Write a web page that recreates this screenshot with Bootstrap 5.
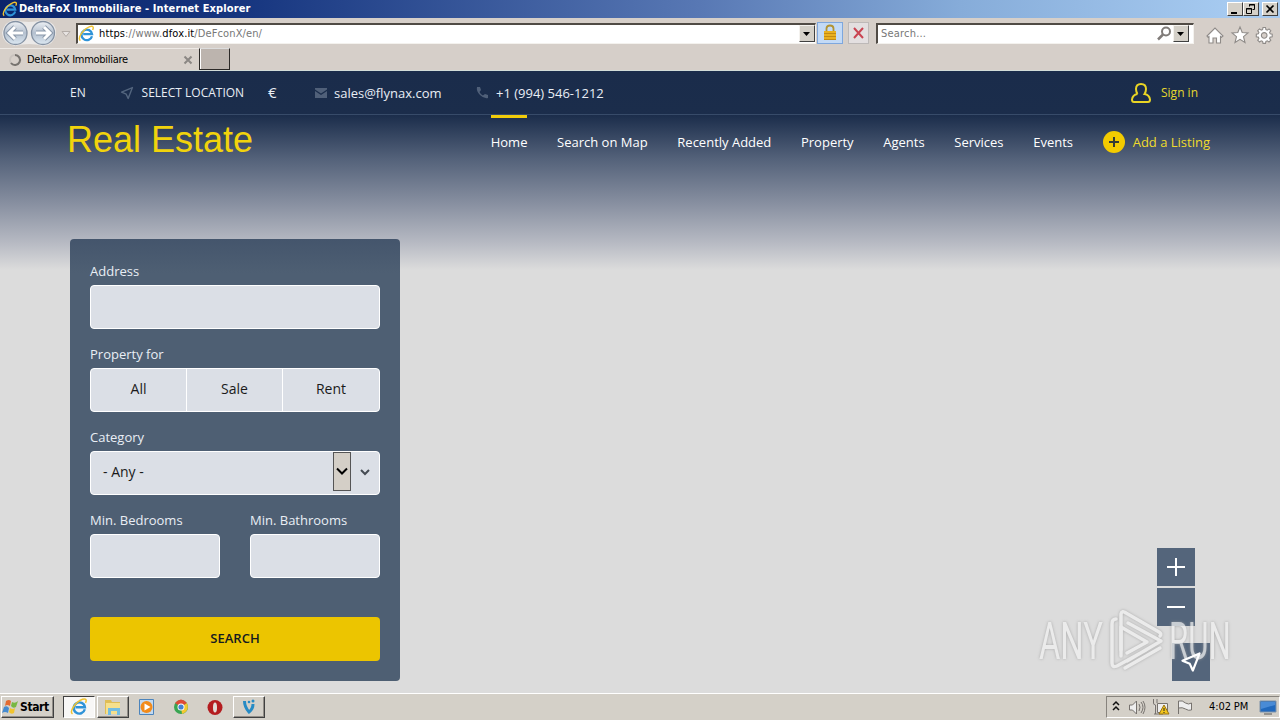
<!DOCTYPE html>
<html lang="en">
<head>
<meta charset="utf-8">
<title>DeltaFoX Immobiliare</title>
<link rel="stylesheet" href="https://cdn.jsdelivr.net/npm/bootstrap@5.3.0/dist/css/bootstrap.min.css">
<style>
html,body{width:1280px;height:720px;overflow:hidden}
body{font-family:"Open Sans",sans-serif;font-size:13px;line-height:18px;background:#dcdcdc;color:#fff}
svg{display:block;flex:none}
.ui{font-family:"DejaVu Sans Condensed","DejaVu Sans",sans-serif;font-size:11px;line-height:14px;color:#000;white-space:nowrap}
.titlebar{height:18px;background:linear-gradient(90deg,#0a246a 0,#16357f 240px,#5878b4 700px,#86acd9 960px,#a6caf0 1230px);padding:0 2px}
.titlebar b{color:#fff;letter-spacing:.1px;margin-left:1px}
.winbtn{width:16px;height:14px;background:#d4d0c8;border:1px solid;border-color:#fff #404040 #404040 #fff}
.toolbar{height:30px;background:#d6cfc9}
.sunken{height:21px;background:#fff;border:1px solid;border-width:2px 1px 1px 2px;border-color:#504b45 #f4f2ee #f4f2ee #504b45}
.drop{width:16px;height:17px;background:#d4d0c8;border:1px solid;border-color:#f4f2ee #404040 #404040 #f4f2ee}
.toolbtn{height:22px;border:1px solid #bdb9b8;background:#e3dfe0}
.lockbtn{width:26px;border-color:#7ea7dd;background:#c3daf6}
.tabs{height:23px;background:#d6cfc9;border-bottom:1px solid #d2dcd8}
.tab1{width:199px;height:22px;border-top:1px solid #eeeae6;background:#d7d0ca}
.newtab{width:31px;height:22px;background:#bcb4ae;border:1px solid #2b2927;border-top-color:#ddd;box-shadow:inset 1px 0 #fff}
.site{height:622px;background:linear-gradient(#1a2c4b 0,#1b2d4b 44px,#54627a 88px,#878fa0 132px,#b7bac3 172px,#dcdcdc 199px)}
.topbar{height:44px;border-bottom:1px solid #374b69;padding:0 70px;color:#e9eef5}
.brandname{font:36px/50px "Liberation Sans",sans-serif;color:#f1d30c;width:200px;margin-left:-3px;height:50px}
.mainnav{height:124px;padding:0 70px}
.mainnav .links{gap:29.65px;height:55px}
.links span,.links .add{line-height:18px;padding-top:18px}
.active-link{border-top:3px solid #f1cc0a;padding-top:15px!important}
.add{gap:8px;color:#f0dc2c}
.searchbox{width:330px;height:442px;margin-left:70px;border-radius:4px;background:linear-gradient(#44556c,#4e5f73 34px);padding:24px 20px 20px;color:#e9eef5}
.searchbox label{display:block;height:22px;line-height:16px}
.field{height:44px;background:#dbdfe6;border:1px solid #fff;border-radius:4px;color:#1a1a1a;font-size:14px}
.field .seg{width:96px;text-align:center;line-height:39px}
.field .seg:last-child{flex:1}
.seg+.seg{border-left:1px solid #fff}
.nativedrop{width:18px;height:39px;background:#d4cfc7;border:1px solid #555;margin-right:9px}
.go{height:44px;border-radius:4px;background:#ecc500;color:#151b20;font-weight:600;font-size:13px;line-height:43px}
.mapbtn{width:38px;height:38px;background:#54657b}
.mapctl{position:absolute;left:1157px;top:548px;gap:2px}
.locate{position:absolute;left:1172px;top:643px}
.watermark{position:absolute;left:1030px;top:600px;opacity:.75;filter:drop-shadow(0 0 1.5px #999)}
.watermark text{font-family:Roboto,sans-serif;font-size:52px}
.taskbar{height:27px;background:#d4d0c8;border-top:1px solid #fff;padding-top:2px}
.raised{height:22px;border:1px solid;border-color:#fff #404040 #404040 #fff;background:#d4d0c8;box-shadow:inset -1px -1px #928e88}
.pressed{border-color:#404040 #fff #fff #404040;background:#f8f7f6;box-shadow:none}
.tray{height:22px;width:174px;border:1px solid;border-color:#87837d #fff #fff #87837d}
</style>
</head>
<body>
<svg width="0" height="0" class="position-absolute">
<defs>
<symbol id="ie" viewBox="0 0 18 18"><path d="M14.800 11.800A5.600 5.600 0 1 1 14.900 9.700H5.500" fill="none" stroke="#2f93d8" stroke-width="2.400"/><path d="M2.500 16.500C-1 14 5.500 4.500 12.500 1.800c3.500-1.200 4.500.5 3 3.500" fill="none" stroke="#f0c230" stroke-width="1.500"/></symbol>
<symbol id="plane" viewBox="0 0 18 18"><path d="M16 2 10.500 16 8 10.500 2 8z" fill="none" stroke="currentColor" stroke-width="1.800" stroke-linejoin="round"/></symbol>
</defs>
</svg>
<header class="ui">
<div class="titlebar d-flex align-items-center"><svg width="16" height="16"><use href="#ie"/></svg><b>DeltaFoX Immobiliare - Internet Explorer</b>
<div class="d-flex ms-auto">
<div class="winbtn"><svg width="14" height="12"><path d="M3 9h6v2H3z"/></svg></div>
<div class="winbtn"><svg width="14" height="12"><path d="M5.500 3.500v-2h5v5h-2M5 2h6M2.500 5.500h5v5h-5zM2 6h6" fill="none" stroke="#000"/></svg></div>
<div class="winbtn" style="margin-left:3px"><svg width="14" height="12"><path d="m3.500 2.500 7 7m0-7-7 7" stroke="#000" stroke-width="1.700"/></svg></div>
</div></div>
<div class="toolbar d-flex align-items-center">
<svg width="76" height="30"><defs><linearGradient id="nb" x2="0" y2="1"><stop stop-color="#edf0f4"/><stop offset=".5" stop-color="#b4c0cf"/><stop offset="1" stop-color="#dce8f2"/></linearGradient></defs>
<path d="M15 2Q29 6 43 2q14 2 13 14-2 11-13 12-14-4-28 0Q3 26 2 15 4 3 15 2" fill="#ebe9e8"/>
<g fill="url(#nb)" stroke="#8592a3" stroke-width="1.300"><circle cx="15.500" cy="15" r="11.500"/><circle cx="43" cy="15" r="11.500"/></g>
<path d="M23 15H9m6-6-6 6 6 6M36 15h14m-6-6 6 6-6 6" fill="none" stroke="#8997a9" stroke-width="5"/><path d="M23 15H9m6-6-6 6 6 6M36 15h14m-6-6 6 6-6 6" fill="none" stroke="#fff" stroke-width="3"/><path d="M62 13.500h8l-4 5z" fill="#e7e3e1" stroke="#b3aca7"/></svg>
<div class="sunken d-flex align-items-center" style="width:740px"><svg class="ms-0" width="17" height="17"><use href="#ie"/></svg><span class="url ms-1" style="letter-spacing:.12px;color:#777"><span class="text-black">https</span>://www.<span class="text-black">dfox.it</span>/DeFconX/en/</span><div class="drop ms-auto"><svg width="14" height="15"><path d="M3 6h7L6.500 10z"/></svg></div></div>
<div class="toolbtn lockbtn" style="margin-left:1px"><svg width="24" height="20"><path d="M8.500 9V5.500q0-3 3.500-3t3.500 3V9" fill="none" stroke="#b29332" stroke-width="1.800"/><path d="M6 8h12v9H6z" fill="#e9b020"/><path d="M6 10.500h12M6 13.500h12M6 16.500h12" stroke="#c38a12"/></svg></div>
<div class="toolbtn" style="width:21px;margin-left:5px"><svg width="19" height="20"><path d="m5 5 9 10m0-10L5 15" stroke="#c94452" stroke-width="2"/></svg></div>
<div class="sunken d-flex align-items-center" style="width:318px;margin-left:7px;color:#777"><span style="margin-left:3px;letter-spacing:.2px">Search...</span><svg class="ms-auto" width="18" height="17"><circle cx="11" cy="6.500" r="4" fill="none" stroke="#807c79" stroke-width="2"/><path d="m8 9.500-5 5" stroke="#807c79" stroke-width="2.500"/></svg><div class="drop" style="margin-right:4px"><svg width="14" height="15"><path d="M3 6h7L6.500 10z"/></svg></div></div>
<svg width="84" height="30"><g transform="translate(-1194 -18)" fill="#fff" stroke="#8f8b88" stroke-width="1.100"><path d="m1207 36 8-8 8 8-1.500 1.200-1-.8V43h-4v-5h-3.500v5h-4v-6.500l-1 .7z"/><path d="m1240 27 2.200 5.500 5.800.4-4.500 3.800 1.500 5.800-5-3.200-5 3.200 1.500-5.800-4.500-3.800 5.800-.4z"/><path fill-rule="evenodd" d="m1263 27.500h2.500l.4 2 1.400.6 1.700-1.200 1.800 1.800-1.200 1.700.6 1.400 2 .4v2.500l-2 .4-.6 1.400 1.200 1.700-1.800 1.800-1.700-1.200-1.400.6-.4 2h-2.500l-.4-2-1.400-.6-1.700 1.200-1.800-1.800 1.200-1.700-.6-1.400-2-.4v-2.500l2-.4.6-1.400-1.200-1.700 1.800-1.800 1.700 1.200 1.400-.6zM1267 35.400a2.800 2.800 0 1 0-5.600 0 2.800 2.800 0 1 0 5.600 0z"/></g></svg>
</div>
<div class="tabs d-flex"><div class="tab1 d-flex align-items-center"><svg width="27" height="22"><circle cx="15" cy="11" r="5" fill="none" stroke="#c9c3be" stroke-width="2"/><path d="M15 6a5 5 0 1 1-4 8" fill="none" stroke="#77736f" stroke-width="2"/></svg><span style="letter-spacing:-.28px;padding-top:1px">DeltaFoX Immobiliare</span><svg class="ms-auto me-1" width="14" height="20"><path d="m3.500 6.500 7 7m0-7-7 7" stroke="#8b8784" stroke-width="2"/></svg></div><div class="newtab"></div></div>
</header>
<main class="site">
<div class="topbar d-flex align-items-center">
<span style="width:50px;font-size:12px">EN</span>
<svg width="14" height="14" style="color:#53657e"><use href="#plane"/></svg><span style="margin-left:7.600px;width:126.400px;font-size:12px" class="text-nowrap">SELECT LOCATION</span><span style="width:47px;font-size:15px;padding-bottom:2px">€</span>
<svg width="12" height="10"><path d="M0 0h12v1.500L6 5.500 0 1.500zM0 3l6 4 6-4v7H0z" fill="#506079"/></svg><span style="margin-left:7px;width:142px">sales@flynax.com</span>
<svg width="13" height="13"><path d="M1 1h3l1 3-1.500 2q1 2.300 3.400 3.400L9 8l3 1v3q-4 1-8-3T1 1" fill="#506079"/></svg><span style="margin-left:7px">+1 (994) 546-1212</span>
<svg class="ms-auto" width="20" height="20" fill="none" stroke="#e9d525" stroke-width="2"><path d="M6.500 11Q5 9 5 6q0-5 5-5t5 5q0 3-1.500 5 5 1 5.500 5.500 0 2.500-2 2.500H3q-2 0-2-2.500Q1.500 12 6.500 11"/></svg><span style="margin:0 12px 0 10px;color:#e5d82e;font-size:12px;padding-top:1px">Sign in</span>
</div>
<div class="mainnav d-flex justify-content-between"><div class="brandname">Real Estate</div>
<nav class="links d-flex text-nowrap"><span class="active-link align-self-start">Home</span><span>Search on Map</span><span>Recently Added</span><span>Property</span><span>Agents</span><span>Services</span><span>Events</span><div class="add d-flex"><svg width="22" height="22" style="margin-top:-2px"><circle cx="11" cy="11" r="11" fill="#f3cb00"/><path d="M6 11h10M11 6v10" stroke="#333b36" stroke-width="2"/></svg>Add a Listing</div></nav></div>
<form class="searchbox">
<label>Address</label><div class="field"></div>
<label style="margin-top:17px">Property for</label><div class="field d-flex"><span class="seg" style="width:95px">All</span><span class="seg">Sale</span><span class="seg">Rent</span></div>
<label style="margin-top:17px">Category</label><div class="field d-flex"><span class="me-auto" style="padding-left:12px;line-height:39px">- Any -</span><div class="nativedrop"><svg width="16" height="37"><path d="m3 15.500 5 5 5-5" fill="none" stroke="#000" stroke-width="2"/></svg></div><svg width="10" height="42" style="margin-right:9px"><path d="m1 18 4 4 4-4" fill="none" stroke="#454b53" stroke-width="2"/></svg></div>
<div class="d-flex" style="gap:30px;margin-top:17px"><div class="flex-fill"><label style="width:130px">Min. Bedrooms</label><div class="field"></div></div><div class="flex-fill"><label style="width:130px">Min. Bathrooms</label><div class="field"></div></div></div>
<div class="go text-center" style="margin-top:39px">SEARCH</div>
</form>
</main>
<div class="mapctl d-flex flex-column"><div class="mapbtn"><svg width="38" height="38"><path d="M10 19h18M19 10v18" stroke="#fff" stroke-width="2"/></svg></div><div class="mapbtn"><svg width="38" height="38"><path d="M10 19h18" stroke="#fff" stroke-width="2"/></svg></div></div>
<div class="mapbtn locate"></div>
<svg class="watermark" width="245" height="90" fill="#f1f1f1"><g transform="translate(9 59) scale(.63 1)"><text>ANY</text></g><g transform="translate(139 59) scale(.6 1)"><text>RUN</text></g>
<g fill="none" stroke="#f1f1f1" stroke-width="3.500" stroke-linecap="round" stroke-linejoin="round"><path d="M86 19q-4 0-4 5v39q0 5 5 3l29-16M91 50V14q1-4 5-1l33 19q3 2 1 4M98 23l33 18-34 20"/><path d="M91 56V27l26 15-20 11M95 68l35-20"/></g></svg>
<div class="mapbtn locate" style="background:none;padding:8px"><svg width="22" height="22"><use href="#plane"/></svg></div>
<footer class="taskbar ui d-flex align-items-start">
<div class="raised d-flex align-items-center" style="width:53px;margin-left:1px"><svg width="18" height="18"><path d="M4 3q3-2 5 0L8 8Q5 6 3 8z" fill="#e36b31"/><path d="M10 4q3 2 6-1l-2 6q-3 2-5-1z" fill="#78b842"/><path d="M2 9q3-2 5 1l-1 5q-3-2-6 0z" fill="#458bd0"/><path d="M8 10q3 2 5 0l-1 5q-3 2-5-1z" fill="#f1c42e"/></svg><b style="font-size:12px;letter-spacing:-.4px">Start</b></div>
<div class="raised pressed d-flex justify-content-center" style="width:32px;margin-left:9px"><svg width="18" height="19"><use href="#ie"/></svg></div>
<div class="raised d-flex justify-content-center" style="width:32px;margin-left:2px"><svg width="20" height="20"><path d="M2 3h6l1 2h8v12H2z" fill="#dfbd55"/><path d="M3 6h14v11H3z" fill="#f6e08c"/><path d="M5 18v-7h12v7h-3v-4H8v4z" fill="#73bde2"/></svg></div>
<svg style="margin-left:9px" width="18" height="22"><path d="M1.500 3.500h14v15h-14z" fill="#c2d9f0" stroke="#4c84bc"/><circle cx="8.500" cy="11" r="6" fill="#f28b1b"/><path d="m6.500 7.500 6 3.500-6 3.500z" fill="#fff"/></svg>
<svg style="margin-left:17px" width="16" height="22"><circle cx="8" cy="11" r="7" fill="#39a552"/><path d="M8 11 2 7q6-7 12 0z" fill="#df4936"/><path d="M8 11 14 7q3 8-5 11z" fill="#f5c831"/><circle cx="8" cy="11" r="3.500" fill="#fff"/><circle cx="8" cy="11" r="2.600" fill="#4581d2"/></svg>
<svg style="margin-left:18px" width="16" height="22"><ellipse cx="8" cy="11.500" rx="7.500" ry="7.500" fill="#b41d20"/><ellipse cx="8" cy="11.500" rx="2" ry="5" fill="#e1dcd7"/></svg>
<div class="raised d-flex justify-content-center" style="width:32px;margin-left:10px"><svg width="18" height="20"><path d="M4.500 4q0 6 4.500 11 4-3 4-8" fill="none" stroke="#268bc5" stroke-width="3"/><circle cx="9" cy="5" r="1.300" fill="#268bc5"/><circle cx="13" cy="4" r="1.500" fill="#268bc5"/></svg></div>
<div class="tray d-flex align-items-center ms-auto"><svg width="100" height="20"><path d="m6 8 3-3 3 3m-6 5 3-3 3 3" fill="none" stroke="#111" stroke-width="1.500"/><g fill="#eee" stroke="#76726e"><path d="M32 7q2 3 0 7m2-9q4 5 0 11m2-12q4 6 0 13" fill="none"/><path d="M22.500 8h3l4-4v13l-4-4h-3z"/><path d="M50.500 6.500h10v9h-10zM46.500 2v4q0 2 2 2v9M50 2v4M47 17h9"/><path d="M71.500 17V4q4-1 7 2 3 2 6 0v7q-3 1-6-1-3-2-7-1"/></g><path d="m57 8 5 9H52z" fill="#f3c51b" stroke="#997313"/><path d="M57 11v3m0 1v1" stroke="#222"/></svg><span style="letter-spacing:-.1px;margin-left:2px">4:02 PM</span><svg class="ms-auto" width="18" height="20" style="margin-right:2px"><path d="M1 4h16v11H1z" fill="#2169bd" stroke="#7f93a9"/><path d="m2 5 14 0v3L2 12z" fill="#498bd6"/><path d="M5 17h8" stroke="#555"/></svg></div>
</footer>
<script src="https://cdn.jsdelivr.net/npm/bootstrap@5.3.0/dist/js/bootstrap.bundle.min.js"></script>
</body>
</html>
